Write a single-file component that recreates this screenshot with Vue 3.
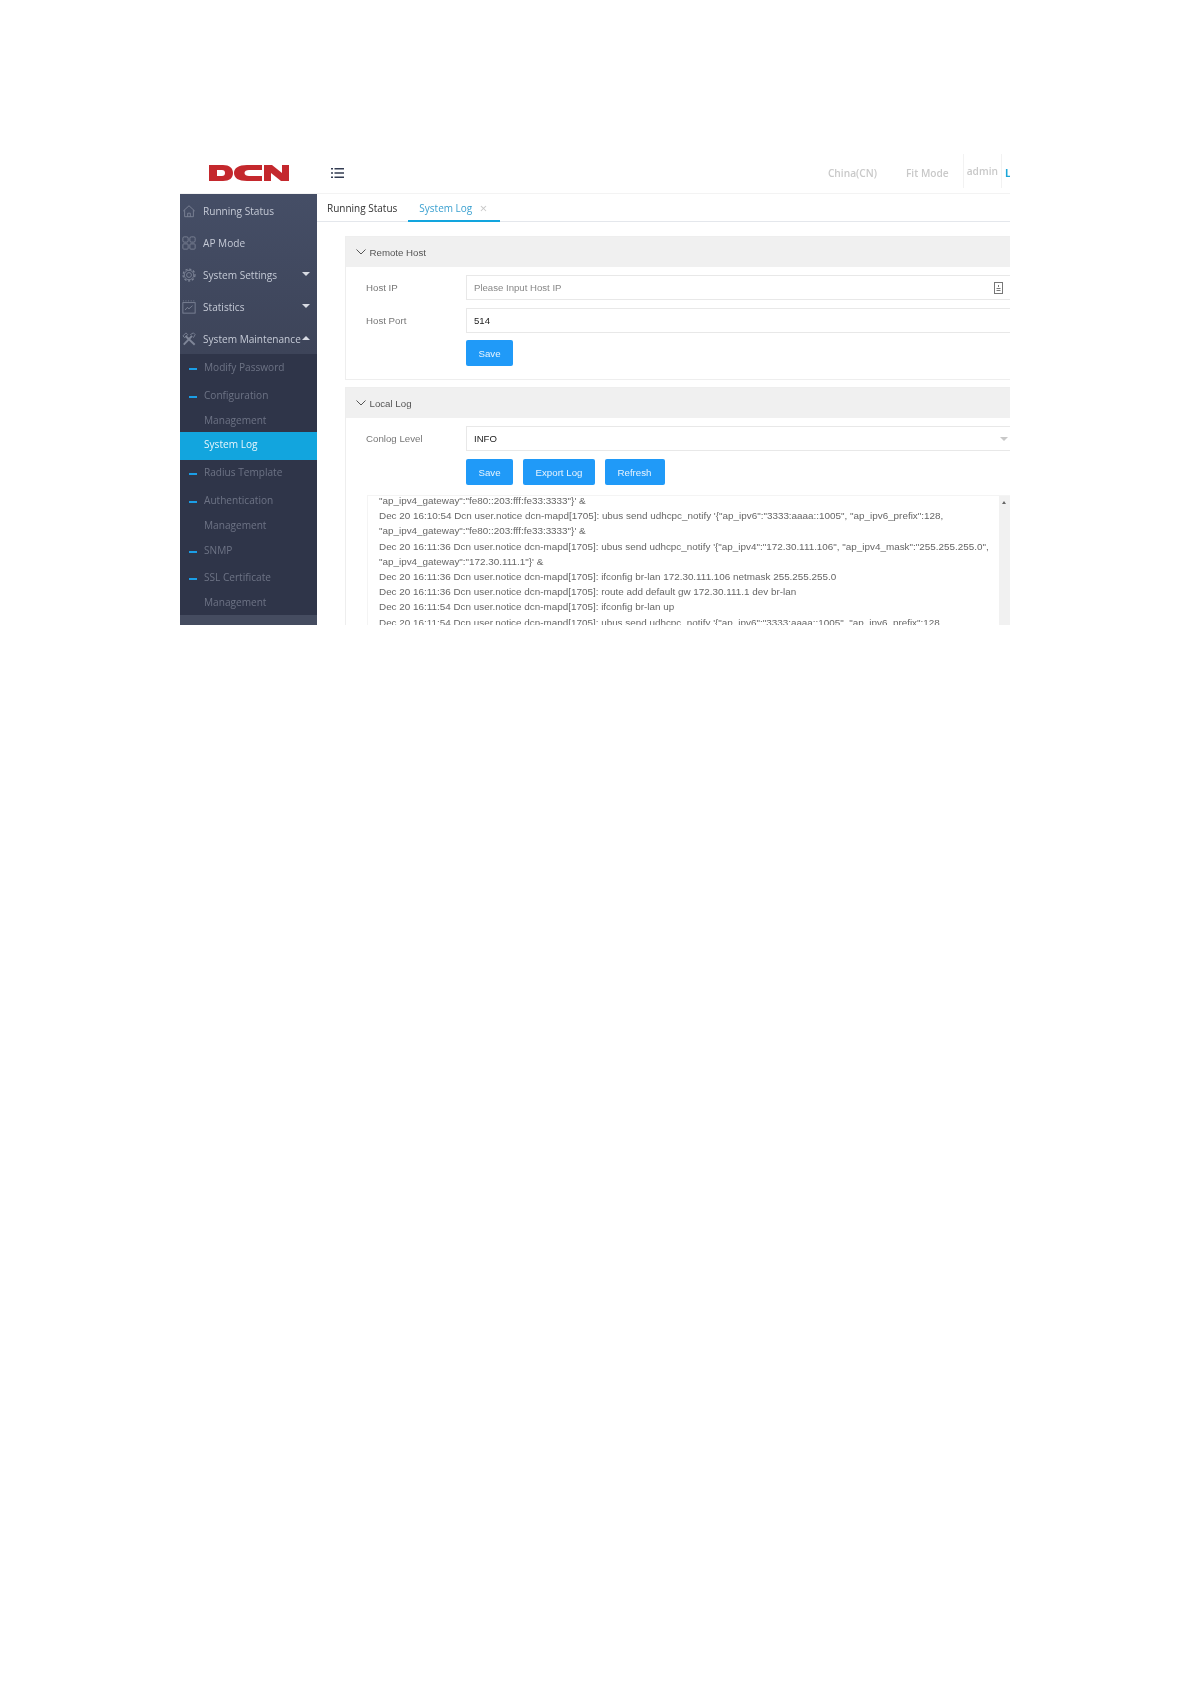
<script setup>
const mainItems = [
  { label: 'Running Status', icon: 'home' },
  { label: 'AP Mode', icon: 'grid' },
  { label: 'System Settings', icon: 'gear', caret: 'down' },
  { label: 'Statistics', icon: 'chart', caret: 'down' },
  { label: 'System Maintenance', icon: 'tools', caret: 'up' }
]
const subItems = [
  { lines: ['Modify Password'], h: 27, top: 1 },
  { lines: ['Configuration', 'Management'], h: 51, top: 1.5 },
  { lines: ['System Log'], h: 28, top: 0, active: true },
  { lines: ['Radius Template'], h: 26, top: 0 },
  { lines: ['Authentication', 'Management'], h: 51, top: 1.5 },
  { lines: ['SNMP'], h: 25, top: 0.5 },
  { lines: ['SSL Certificate', 'Management'], h: 53, top: 2.5 }
]
const logLines = [
  `"ap_ipv4_gateway":"fe80::203:fff:fe33:3333"}' &`,
  `Dec 20 16:10:54 Dcn user.notice dcn-mapd[1705]: ubus send udhcpc_notify '{"ap_ipv6":"3333:aaaa::1005", "ap_ipv6_prefix":128,`,
  `"ap_ipv4_gateway":"fe80::203:fff:fe33:3333"}' &`,
  `Dec 20 16:11:36 Dcn user.notice dcn-mapd[1705]: ubus send udhcpc_notify '{"ap_ipv4":"172.30.111.106", "ap_ipv4_mask":"255.255.255.0",`,
  `"ap_ipv4_gateway":"172.30.111.1"}' &`,
  `Dec 20 16:11:36 Dcn user.notice dcn-mapd[1705]: ifconfig br-lan 172.30.111.106 netmask 255.255.255.0`,
  `Dec 20 16:11:36 Dcn user.notice dcn-mapd[1705]: route add default gw 172.30.111.1 dev br-lan`,
  `Dec 20 16:11:54 Dcn user.notice dcn-mapd[1705]: ifconfig br-lan up`,
  `Dec 20 16:11:54 Dcn user.notice dcn-mapd[1705]: ubus send udhcpc_notify '{"ap_ipv6":"3333:aaaa::1005", "ap_ipv6_prefix":128,`
]
</script>

<template>
  <div class="page">
    <div class="shot">
      <header class="topbar">
        <div class="logo-cell">
          <svg class="logo" viewBox="0 0 80 16" width="80" height="16">
            <path fill="#c4282d" fill-rule="evenodd" d="M0 0H14C20.500 0 24 3 24 8S20.500 16 14 16H0ZM8 5V11H13C15 11 16 10 16 8S15 5 13 5Z" />
            <path fill="#c4282d" d="M40 0H53V5H40C37.500 5 35.500 6 35.500 8S37.500 11 40 11H53V16H38C29.500 16 25 13 25 8S29.500 0 38 0Z" />
            <path fill="#c4282d" d="M55 0H63L73 8V0H80V16H72L62 8V16H55Z" />
          </svg>
        </div>
        <svg class="menu-icon" viewBox="0 0 13 12" width="13" height="12">
          <path fill="#333c52" d="M0 1h2v1.600H0zM3.500 1H13v1.600H3.500zM0 5.200h2v1.600H0zM3.500 5.200H13v1.600H3.500zM0 9.400h2V11H0zM3.500 9.400H13V11H3.500z" />
        </svg>
        <div class="top-right">
          <span class="top-text country">China(CN)</span>
          <span class="top-text mode">Fit Mode</span>
          <span class="top-text user">admin</span>
          <span class="logout">L</span>
        </div>
      </header>

      <div class="body">
        <aside class="sidebar">
          <div class="main-list">
            <div v-for="item in mainItems" :key="item.label" class="main-item">
              <svg class="side-icon" viewBox="0 0 16 16" width="14" height="14" fill="none" stroke="#7f8698" stroke-width="1">
                <g v-if="item.icon === 'home'">
                  <path d="M1.500 8 8 2l6.500 6" />
                  <path d="M3 7v7.500h10V7" />
                  <path d="M6.500 14.500V10.500h3v4" />
                </g>
                <g v-else-if="item.icon === 'grid'">
                  <rect x="1" y="1" width="6" height="6" rx="1.500" />
                  <rect x="9" y="1" width="6" height="6" rx="1.500" />
                  <rect x="1" y="9" width="6" height="6" rx="1" />
                  <rect x="9" y="9" width="6" height="6" rx="1" />
                </g>
                <g v-else-if="item.icon === 'gear'">
                  <circle cx="8" cy="8" r="2.800" />
                  <circle cx="8" cy="8" r="5.400" />
                  <circle cx="8" cy="8" r="6.800" stroke-dasharray="2.500 2" stroke-width="1.400" />
                </g>
                <g v-else-if="item.icon === 'chart'">
                  <rect x="1" y="3" width="14" height="12" />
                  <path d="M1 1h1M4 1h1M7 1h1M10 1h1M13 1h1" />
                  <path d="M3.500 11.500 6 8.500l2 1.500 4-3.500" />
                </g>
                <g v-else>
                  <path d="M2 14.500 11.500 4.500" stroke-width="2.200" />
                  <path d="M9.500 3 13 1l2 2-2 3.500" />
                  <path d="M4 4.500 14.500 14.500" stroke-width="2.200" />
                  <path d="M1 4.500 4.500 1 6.500 3 3 6.500Z" />
                </g>
              </svg>
              <span class="main-label">{{ item.label }}</span>
              <span v-if="item.caret" class="caret" :class="item.caret"></span>
            </div>
          </div>
          <div class="sub-list">
            <div
              v-for="item in subItems"
              :key="item.lines[0]"
              class="sub-item"
              :class="{ active: item.active }"
              :style="{ height: item.h + 'px', paddingTop: item.top + 'px' }"
            >
              <span class="dash"></span>
              <div class="sub-label">
                <div v-for="line in item.lines" :key="line" class="sub-line">{{ line }}</div>
              </div>
            </div>
          </div>
          <div class="sidebar-rest"></div>
        </aside>

        <main class="content">
          <nav class="tabs">
            <span class="tab first">Running Status</span>
            <span class="tab current">System Log<span class="tab-x">×</span></span>
          </nav>

          <section class="panel remote">
            <div class="panel-head">
              <svg class="chev" viewBox="0 0 10 6" width="10" height="6"><path d="M.5.500 5 5 9.500.5" fill="none" stroke="#555" /></svg>
              Remote Host
            </div>
            <div class="panel-body">
              <div class="row">
                <label class="lbl">Host IP</label>
                <div class="field placeholder">
                  Please Input Host IP
                  <svg class="field-icon" viewBox="0 0 9 12" width="9" height="12" fill="none" stroke="#777">
                    <rect x=".5" y=".5" width="8" height="11" />
                    <path d="M4.500 3v2M2.500 6.500h4M2.500 8.500h4" />
                  </svg>
                </div>
              </div>
              <div class="row">
                <label class="lbl">Host Port</label>
                <div class="field value">514</div>
              </div>
              <div class="actions tight">
                <button class="btn w47">Save</button>
              </div>
            </div>
          </section>

          <section class="panel local">
            <div class="panel-head">
              <svg class="chev" viewBox="0 0 10 6" width="10" height="6"><path d="M.5.500 5 5 9.500.5" fill="none" stroke="#555" /></svg>
              Local Log
            </div>
            <div class="panel-body">
              <div class="row">
                <label class="lbl">Conlog Level</label>
                <div class="field value plain">INFO<span class="select-caret"></span></div>
              </div>
              <div class="actions">
                <button class="btn w47">Save</button>
                <button class="btn w72">Export Log</button>
                <button class="btn w60">Refresh</button>
              </div>
              <div class="logbox">
                <div class="loglines">
                  <div v-for="(line, i) in logLines" :key="i" class="logline">{{ line }}</div>
                </div>
                <div class="scroll"><span class="scroll-arrow"></span></div>
              </div>
            </div>
          </section>
        </main>
      </div>
    </div>
  </div>
</template>

<style>
html, body { margin: 0; background: #fff; }
</style>

<style scoped>
.page { height: 1684px; padding: 150px 181px 0 180px; box-sizing: border-box; background: #fff; }
.shot { height: 475px; overflow: hidden; display: flex; flex-direction: column; filter: blur(.4px); font-family: "Liberation Sans", Arial, sans-serif; }

.topbar { height: 44px; flex: none; display: flex; align-items: center; box-sizing: border-box; border-bottom: 1px solid #f3f3f3; padding-top: 2px; }
.logo-cell { width: 137px; display: flex; justify-content: center; }
.logo { display: block; }
.menu-icon { margin-left: 14px; }
.top-right { margin-left: auto; height: 100%; display: flex; align-items: center; font-family: "Open Sans", sans-serif; font-size: 10.200px; font-weight: 600; }
.top-text { color: #c9c9c9; }
.country { margin-right: 29px; }
.mode { margin-right: 14px; }
.user { border-left: 1px solid #f2f2f2; border-right: 1px solid #f2f2f2; height: 34px; line-height: 34px; padding: 0 3px; margin-top: -4px; }
.logout { color: #1ba6d8; margin-left: 3px; width: 5px; overflow: hidden; font-weight: 700; }

.body { flex: 1; display: flex; min-height: 0; }
.sidebar { width: 137px; flex: none; display: flex; flex-direction: column; background: #2f3549; font-family: "Open Sans", sans-serif; }
.main-list { height: 160px; flex: none; background: linear-gradient(#454e66, #3d4459); }
.main-item { height: 32px; position: relative; display: flex; align-items: center; padding: 2px 0 0 2px; box-sizing: border-box; }
.side-icon { flex: none; }
.main-label { margin-left: 7px; font-size: 10.100px; color: #c5cad6; white-space: nowrap; }
.caret { position: absolute; right: 7px; width: 0; height: 0; border-left: 4px solid transparent; border-right: 4px solid transparent; }
.caret.down { top: 14px; border-top: 4px solid #d8dbe3; }
.caret.up { top: 14px; border-bottom: 4px solid #d8dbe3; }

.sub-list { flex: none; }
.sub-item { display: flex; align-items: flex-start; padding-left: 9px; box-sizing: border-box; }
.dash { width: 8px; height: 2px; background: #1b9ee6; flex: none; margin-top: 13px; }
.sub-label { margin-left: 7px; font-size: 10.100px; color: #6d7385; }
.sub-line { line-height: 25px; white-space: nowrap; }
.sub-item.active { background: #12a5de; }
.sub-item.active .dash { background: transparent; }
.sub-item.active .sub-label { color: #e8f6fc; }
.sidebar-rest { flex: 1; background: #454c60; }

.content { flex: 1; min-width: 0; }
.tabs { height: 28px; box-sizing: border-box; border-bottom: 1px solid #e4e7ec; display: flex; font-size: 10px; line-height: 29px; font-family: "Open Sans", sans-serif; margin-bottom: 14px; }
.tab { color: #333; }
.tab.first { margin-left: 10px; }
.tab.current { margin-left: 11px; padding: 0 28px 0 11px; color: #3aa0d0; border-bottom: 2px solid #12a5de; height: 28px; box-sizing: border-box; position: relative; }
.tab-x { position: absolute; right: 13px; top: 0; color: #c8c8c8; font-size: 13px; }

.panel { margin-left: 28px; border: 1px solid #eeeeee; border-right: 0; box-sizing: border-box; }
.remote { height: 144px; margin-bottom: 7px; }
.local { height: 300px; }
.panel-head { height: 30px; background: #f0f0f0; display: flex; align-items: center; padding-left: 10px; font-size: 9.700px; color: #555; }
.chev { margin-right: 3.500px; }
.panel-body { padding-top: 8px; }
.row { display: flex; height: 25px; margin-bottom: 8px; }
.lbl { width: 120px; padding-left: 20px; box-sizing: border-box; font-size: 9.700px; color: #777; line-height: 25px; }
.field { flex: 1; box-sizing: border-box; border: 1px solid #e8e8e8; border-right: 0; padding-left: 7px; font-size: 9.600px; line-height: 23px; position: relative; }
.placeholder { color: #888; }
.value { color: #222; }
.field-icon { position: absolute; right: 7px; top: 6px; }
.select-caret { position: absolute; right: 2px; top: 10px; border-left: 4px solid transparent; border-right: 4px solid transparent; border-top: 4px solid #c8c8c8; }
.actions { display: flex; gap: 10px; padding-left: 120px; }
.actions.tight { margin-top: -1px; }
.btn { height: 26px; border: 0; border-radius: 2px; background: #209af8; color: #e8f4fe; font-family: "Liberation Sans", Arial, sans-serif; font-size: 9.700px; padding: 0; }
.w47 { width: 47px; }
.w72 { width: 72px; }
.w60 { width: 60px; margin-left: -0.500px; }

.logbox { margin: 10px 0 0 21px; border: 1px solid #f4f4f4; border-right: 0; display: flex; height: 140px; overflow: hidden; }
.loglines { flex: 1; min-width: 0; margin-top: -3px; padding-left: 11px; }
.logline { font-size: 9.900px; line-height: 15.200px; color: #666; white-space: nowrap; }
.scroll { width: 11px; flex: none; background: #f1f1f1; position: relative; }
.scroll-arrow { position: absolute; left: 3px; top: 5px; border-left: 2.500px solid transparent; border-right: 2.500px solid transparent; border-bottom: 3px solid #666; }
</style>
